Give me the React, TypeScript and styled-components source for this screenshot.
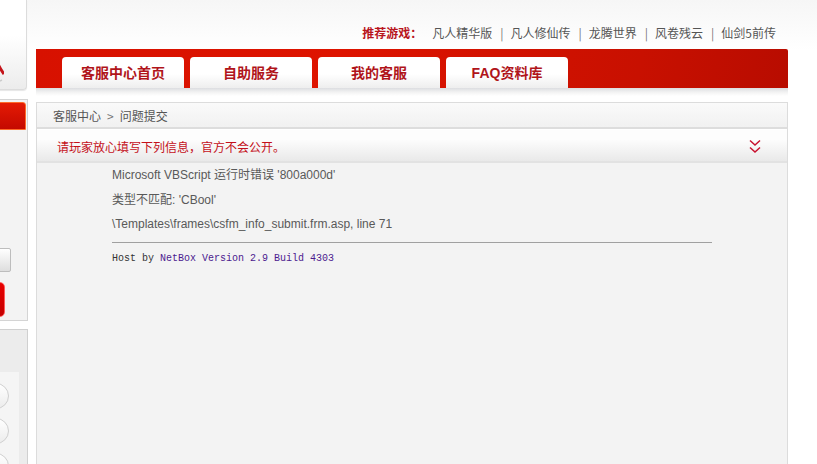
import styled, { createGlobalStyle } from "styled-components";

const GlobalStyle = createGlobalStyle`
  html, body {
    margin: 0;
    padding: 0;
    background: #ffffff;
  }
  body {
    font-family: "Liberation Sans", "Noto Sans CJK SC", sans-serif;
    font-size: 12px;
  }
`;

const tabs = ["客服中心首页", "自助服务", "我的客服", "FAQ资料库"];
const games = ["凡人精华版", "凡人修仙传", "龙腾世界", "风卷残云", "仙剑5前传"];

export default function App() {
  return (
    <>
      <GlobalStyle />
      <Page>
        <Sidebar>
          <LogoBox>
            <LogoMark viewBox="0 0 40 30">
              <path d="M30 0 Q34 12 40 20" stroke="#c4141a" strokeWidth="3" fill="none" />
              <path d="M22 26 Q30 30 38 26" stroke="#ccc" strokeWidth="1.5" fill="none" />
            </LogoMark>
          </LogoBox>
          <SideBox>
            <SideTitle />
            <SideSpacer />
            <GrayButton />
            <RedButton />
          </SideBox>
          <SideList>
            <SideListInner>
              <RoundButton />
              <RoundButton />
              <RoundButton />
            </SideListInner>
          </SideList>
        </Sidebar>

        <Main>
          <TopLinks>
            <TopLabel>推荐游戏：</TopLabel>
            {games.map((g, i) => (
              <span key={g}>
                {i > 0 && <Sep>|</Sep>}
                <GameLink>{g}</GameLink>
              </span>
            ))}
          </TopLinks>

          <NavBar>
            {tabs.map((t) => (
              <Tab key={t}>{t}</Tab>
            ))}
          </NavBar>
          <NavShadow />

          <Panel>
            <Crumbs>
              客服中心 <CrumbArrow>&gt;</CrumbArrow> 问题提交
            </Crumbs>
            <Notice>
              <NoticeText>请玩家放心填写下列信息，官方不会公开。</NoticeText>
              <Chevrons viewBox="0 0 12 15">
                <path d="M1 1.5 L6 6 L11 1.5" stroke="#c8102e" strokeWidth="1.5" fill="none" />
                <path d="M1 8.5 L6 13 L11 8.5" stroke="#c8102e" strokeWidth="1.5" fill="none" />
              </Chevrons>
            </Notice>
            <Content>
              <ErrorLine>Microsoft VBScript 运行时错误 '800a000d'</ErrorLine>
              <ErrorLine>类型不匹配: 'CBool'</ErrorLine>
              <ErrorLine>\Templates\frames\csfm_info_submit.frm.asp, line 71</ErrorLine>
              <Rule />
              <HostLine>
                Host by <HostLink>NetBox Version 2.9 Build 4303</HostLink>
              </HostLine>
            </Content>
          </Panel>
        </Main>
      </Page>
    </>
  );
}

const Page = styled.div`
  display: flex;
  align-items: flex-start;
  gap: 8px;
  height: 464px;
  overflow: hidden;
  background: linear-gradient(#f6f6f6, #ffffff 50px);
`;

const Sidebar = styled.div`
  width: 28px;
  flex: none;
  height: 464px;
  overflow: hidden;
  display: flex;
  flex-direction: column;
  align-items: flex-end;
`;

const LogoBox = styled.div`
  flex: none;
  width: 200px;
  height: 90px;
  box-sizing: border-box;
  border: 1px solid #dcdcdc;
  border-top: none;
  border-bottom-right-radius: 4px;
  background: linear-gradient(#ffffff 40%, #ececec);
  box-shadow: 0 1px 1px #e6e6e6;
  position: relative;
  margin-right: 1px;
`;

const LogoMark = styled.svg`
  position: absolute;
  right: 22px;
  top: 54px;
  width: 40px;
  height: 30px;
`;

const SideBox = styled.div`
  flex: none;
  width: 200px;
  height: 222px;
  margin-top: 9px;
  box-sizing: border-box;
  border: 1px solid #d4d4d4;
  background: #f3f3f3;
  padding-top: 2px;
  display: flex;
  flex-direction: column;
  align-items: flex-end;
`;

const SideTitle = styled.div`
  width: 190px;
  height: 28px;
  margin-right: 1px;
  box-sizing: border-box;
  border: 1px solid #ff6a2a;
  border-radius: 0 3px 0 0;
  background: linear-gradient(#e41a04, #c40a00);
`;

const SideSpacer = styled.div`
  height: 118px;
`;

const GrayButton = styled.div`
  width: 60px;
  height: 24px;
  margin-right: 16px;
  box-sizing: border-box;
  border: 1px solid #bdbdbd;
  border-radius: 2px;
  background: linear-gradient(#ffffff, #dedede);
`;

const RedButton = styled.div`
  width: 90px;
  height: 35px;
  margin-top: 10px;
  margin-right: 22px;
  box-sizing: border-box;
  border: 1px solid #ff5a5a;
  border-radius: 5px;
  background: linear-gradient(#e80000, #c40000);
`;

const SideList = styled.div`
  flex: none;
  width: 200px;
  height: 140px;
  margin-top: 8px;
  box-sizing: border-box;
  border: 1px solid #d0d0d0;
  background: #ececec;
  padding-top: 42px;
  display: flex;
  flex-direction: column;
  align-items: flex-end;
`;

const SideListInner = styled.div`
  width: 180px;
  flex: 1;
  margin-right: 8px;
  background: #f5f5f5;
  padding-top: 11px;
  display: flex;
  flex-direction: column;
  align-items: flex-end;
  gap: 9px;
`;

const RoundButton = styled.div`
  width: 26px;
  height: 26px;
  margin-right: 10px;
  box-sizing: border-box;
  border-radius: 50%;
  border: 1px solid #cfcfcf;
  background: linear-gradient(#ffffff, #ececec);
`;

const Main = styled.div`
  width: 752px;
  flex: none;
  display: flex;
  flex-direction: column;
`;

const TopLinks = styled.div`
  height: 49px;
  box-sizing: border-box;
  padding: 25px 12px 0 0;
  display: flex;
  justify-content: flex-end;
  align-items: flex-start;
  font-size: 12px;
  line-height: 16px;
  font-family: "Noto Sans CJK SC", "Liberation Sans", sans-serif;
`;

const TopLabel = styled.span`
  color: #b8141c;
  font-weight: bold;
  margin-right: 10px;
`;

const GameLink = styled.span`
  color: #555555;
`;

const Sep = styled.span`
  color: #777777;
  margin: 0 7px 0 8px;
`;

const NavBar = styled.div`
  height: 39px;
  box-sizing: border-box;
  padding: 8px 0 0 26px;
  display: flex;
  gap: 6px;
  background: linear-gradient(100deg, #d71100 0%, #de1400 40%, #c81000 80%, #b80c00 100%);
  border-top-right-radius: 2px;
`;

const Tab = styled.div`
  width: 122px;
  height: 31px;
  box-sizing: border-box;
  border-radius: 4px 4px 0 0;
  background: linear-gradient(#ffffff 55%, #eeeeee);
  display: flex;
  align-items: center;
  justify-content: center;
  padding-bottom: 2px;
  color: #b0141a;
  font-weight: bold;
  font-size: 14px;
  font-family: "Liberation Sans", "Noto Sans CJK SC", sans-serif;
`;

const NavShadow = styled.div`
  height: 14px;
  background: linear-gradient(#dcdde0, #f2f2f2 4px, #ffffff 8px);
`;

const Panel = styled.div`
  display: flex;
  flex-direction: column;
  border-left: 1px solid #dcdcdc;
  border-right: 1px solid #dcdcdc;
  height: 362px;
  background: #f3f3f3;
`;

const Crumbs = styled.div`
  height: 27px;
  box-sizing: border-box;
  border-top: 1px solid #dcdcdc;
  border-bottom: 2px solid #dddddd;
  background: linear-gradient(#fafafa, #f1f1f1);
  padding-left: 16px;
  display: flex;
  align-items: center;
  gap: 4px;
  color: #555555;
  font-size: 12px;
  font-family: "Noto Sans CJK SC", "Liberation Sans", sans-serif;
`;

const CrumbArrow = styled.span`
  color: #777777;
  margin: 0 2px;
`;

const Notice = styled.div`
  height: 34px;
  box-sizing: border-box;
  border-top: 1px solid #ffffff;
  border-bottom: 2px solid #e2e2e2;
  background: linear-gradient(#fdfdfd 30%, #e9e9e9);
  padding: 1px 26px 0 20px;
  display: flex;
  align-items: center;
  justify-content: space-between;
`;

const NoticeText = styled.span`
  color: #c4101a;
  font-size: 12px;
  font-family: "Noto Sans CJK SC", "Liberation Sans", sans-serif;
`;

const Chevrons = styled.svg`
  width: 12px;
  height: 15px;
`;

const Content = styled.div`
  padding: 0 0 0 75px;
  display: flex;
  flex-direction: column;
  align-items: flex-start;
`;

const ErrorLine = styled.div`
  color: #595959;
  font-size: 12px;
  line-height: 24.5px;
  font-family: "Liberation Sans", "Noto Sans CJK SC", sans-serif;
`;

const Rule = styled.hr`
  width: 600px;
  margin: 5px 0 9px;
  border: none;
  border-top: 1px solid #a0a0a0;
  height: 0;
`;

const HostLine = styled.div`
  color: #333333;
  font-size: 10px;
  line-height: 14px;
  font-family: "Liberation Mono", monospace;
`;

const HostLink = styled.span`
  color: #4b1a8f;
`;
